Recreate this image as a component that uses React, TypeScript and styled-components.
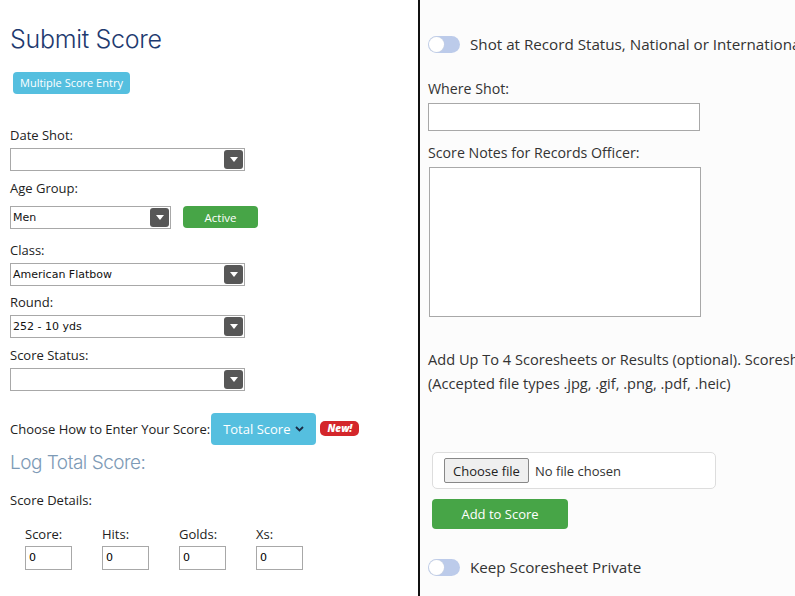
import { createGlobalStyle } from "styled-components";
import styled from "styled-components";

const GlobalStyle = createGlobalStyle`
 html, body {
  margin: 0;
  padding: 0;
  overflow: hidden;
 }
 body {
  font-family: "Open Sans", "Liberation Sans", sans-serif;
  color: #222;
  background: #fff;
 }
 * {
  box-sizing: border-box;
 }
`;

const Page = styled.div`
 display: grid;
 grid-template-columns: 418px 1fr;
 width: 795px;
 height: 596px;
 overflow: hidden;
`;

const LeftPane = styled.div`
 background: #fff;
 padding: 24px 0 0 10px;
 display: flex;
 flex-direction: column;
`;

const RightPane = styled.div`
 background: #fcfcfc;
 border-left: 2px solid #111;
 padding: 34px 0 0 8px;
 display: flex;
 flex-direction: column;
 overflow: hidden;
`;

const Title = styled.h1`
 margin: 0;
 font-family: "Inter", "Open Sans", sans-serif;
 font-weight: 300;
 font-size: 25px;
 color: #1e3a6f;
 letter-spacing: -0.3px;
`;

const ButtonSlot = styled.div`
 margin: 16px 0 0 3px;
`;

const SmallButton = styled.button<{ $tone: "info" | "success"; $width?: number }>`
 border: none;
 border-radius: 4px;
 background: ${(p) => (p.$tone === "info" ? "#55bfdf" : "#47a547")};
 color: #fff;
 font-family: "Open Sans", sans-serif;
 font-size: ${(p) => (p.$tone === "info" ? 11 : 11.5)}px;
 font-weight: 500;
 height: 22px;
 width: ${(p) => (p.$width ? `${p.$width}px` : "auto")};
 padding: 0 7px;
 cursor: pointer;
`;

const Field = styled.div<{ $top?: number }>`
 display: flex;
 flex-direction: column;
 gap: 5px;
 margin-top: ${(p) => p.$top ?? 8}px;
`;

const Label = styled.label`
 font-size: 13px;
 color: #222;
 line-height: 16px;
`;

const Row = styled.div`
 display: flex;
 align-items: center;
 gap: 12px;
 margin: 5px 0 5px;
`;

const SelectBox = styled.div<{ $width: number }>`
 width: ${(p) => p.$width}px;
 height: 23px;
 border: 1px solid #a8a8a8;
 background: #fff;
 display: flex;
 align-items: center;
 justify-content: space-between;
 padding: 0 1px 0 2px;
 font-family: "DejaVu Sans", Verdana, sans-serif;
 font-size: 11px;
 color: #111;
`;

const Arrow = styled.span`
 width: 19px;
 height: 19px;
 border-radius: 3px;
 background: #575757;
 display: flex;
 align-items: center;
 justify-content: center;
 &::after {
  content: "";
  border-left: 4px solid transparent;
  border-right: 4px solid transparent;
  border-top: 5px solid #fff;
 }
`;

const ChooseRow = styled.div`
 display: flex;
 align-items: center;
 gap: 1px;
 margin-top: 22px;
 font-size: 13px;
`;

const DropButton = styled.button`
 border: none;
 border-radius: 4px;
 background: #55bfdf;
 color: #fff;
 font-family: "Open Sans", sans-serif;
 font-size: 13px;
 height: 32px;
 padding: 0 12px;
 display: flex;
 align-items: center;
 gap: 5px;
`;

const NewBadge = styled.span`
 background: #d4262b;
 color: #fff;
 font-size: 10px;
 font-weight: 800;
 font-style: italic;
 border-radius: 5px;
 padding: 1px 7px;
 line-height: 13px;
 margin-left: 3px;
`;

const SubTitle = styled.h2`
 margin: 6px 0 0;
 font-family: "Inter", "Open Sans", sans-serif;
 font-weight: 300;
 font-size: 19px;
 color: #7d9ab6;
 letter-spacing: -0.5px;
`;

const Details = styled.div`
 margin-top: 17px;
 font-size: 13px;
`;

const NumberGrid = styled.div`
 display: grid;
 grid-template-columns: repeat(4, 77px);
 margin: 16px 0 0 15px;
`;

const NumberField = styled.div`
 display: flex;
 flex-direction: column;
 gap: 3px;
 font-size: 13px;
`;

const NumberInput = styled.input`
 width: 47px;
 height: 24px;
 border: 1px solid #a8a8a8;
 font-family: "DejaVu Sans", sans-serif;
 font-size: 11px;
 padding: 0 3px;
`;

const ToggleRow = styled.div<{ $top?: number }>`
 display: flex;
 align-items: center;
 gap: 10px;
 white-space: nowrap;
 font-size: 15.2px;
 color: #333;
 margin-top: ${(p) => p.$top ?? 0}px;
`;

const Toggle = styled.span`
 position: relative;
 width: 32px;
 height: 17px;
 border-radius: 9px;
 background: #bccbea;
 flex-shrink: 0;
 &::before {
  content: "";
  position: absolute;
  left: 1px;
  top: 1px;
  width: 15px;
  height: 15px;
  border-radius: 50%;
  background: #fff;
  box-shadow: 0 0 0 0.5px #c9d2e2;
 }
`;

const RLabel = styled.label`
 font-size: 14.2px;
 color: #333;
 line-height: 18px;
 white-space: nowrap;
`;

const TextInput = styled.input`
 width: 272px;
 height: 28px;
 border: 1px solid #a8a8a8;
 background: #fff;
`;

const NotesArea = styled.textarea`
 width: 272px;
 height: 150px;
 border: 1px solid #a8a8a8;
 background: #fff;
 resize: none;
 margin-left: 1px;
`;

const UploadText = styled.p`
 margin: 30px 0 0;
 font-size: 14.6px;
 line-height: 24px;
 color: #333;
 white-space: nowrap;
`;

const FileBox = styled.div`
 width: 284px;
 height: 37px;
 margin: 57px 0 0 4px;
 border: 1px solid #ddd;
 border-radius: 5px;
 background: #fff;
 display: flex;
 align-items: center;
 padding-left: 11px;
 gap: 6px;
 font-size: 13px;
 color: #333;
`;

const FileButton = styled.span`
 height: 25px;
 padding: 0 8px;
 border: 1px solid #888;
 border-radius: 2px;
 background: #efefef;
 display: flex;
 align-items: center;
 font-size: 13px;
 color: #222;
`;

const AddButton = styled.button`
 width: 136px;
 height: 30px;
 margin: 10px 0 0 4px;
 border: none;
 border-radius: 4px;
 background: #47a547;
 color: #fff;
 font-family: "Open Sans", sans-serif;
 font-size: 13px;
`;

const selects = [
 { label: "Class:", value: "American Flatbow", top: 8 },
 { label: "Round:", value: "252 - 10 yds", top: 8 },
 { label: "Score Status:", value: "", top: 9 },
];

const Chevron = () => (
 <svg width="9" height="6" viewBox="0 0 9 6">
  <path d="M1 1l3.5 3.5L8 1" stroke="#1b2b44" strokeWidth="1.8" fill="none" />
 </svg>
);

export default function App() {
 return (
  <Page>
   <GlobalStyle />
   <LeftPane>
    <Title>Submit Score</Title>
    <ButtonSlot>
     <SmallButton $tone="info">Multiple Score Entry</SmallButton>
    </ButtonSlot>
    <Field $top={33}>
     <Label>Date Shot:</Label>
     <SelectBox $width={235}>
      <span></span>
      <Arrow />
     </SelectBox>
    </Field>
    <Field $top={9}>
     <Label>Age Group:</Label>
     <Row>
      <SelectBox $width={161}>
       <span>Men</span>
       <Arrow />
      </SelectBox>
      <SmallButton $tone="success" $width={75}>
       Active
      </SmallButton>
     </Row>
    </Field>
    {selects.map((s) => (
     <Field key={s.label} $top={s.top}>
      <Label>{s.label}</Label>
      <SelectBox $width={235}>
       <span>{s.value}</span>
       <Arrow />
      </SelectBox>
     </Field>
    ))}
    <ChooseRow>
     <span>Choose How to Enter Your Score:</span>
     <DropButton>
      Total Score <Chevron />
     </DropButton>
     <NewBadge>New!</NewBadge>
    </ChooseRow>
    <SubTitle>Log Total Score:</SubTitle>
    <Details>Score Details:</Details>
    <NumberGrid>
     {["Score:", "Hits:", "Golds:", "Xs:"].map((l) => (
      <NumberField key={l}>
       <span>{l}</span>
       <NumberInput defaultValue="0" />
      </NumberField>
     ))}
    </NumberGrid>
   </LeftPane>
   <RightPane>
    <ToggleRow>
     <Toggle />
     Shot at Record Status, National or International
    </ToggleRow>
    <Field $top={26}>
     <RLabel>Where Shot:</RLabel>
     <TextInput />
    </Field>
    <Field $top={13}>
     <RLabel>Score Notes for Records Officer:</RLabel>
     <NotesArea />
    </Field>
    <UploadText>
     Add Up To 4 Scoresheets or Results (optional). Scoresheets will be
     <br />
     (Accepted file types .jpg, .gif, .png, .pdf, .heic)
    </UploadText>
    <FileBox>
     <FileButton>Choose file</FileButton>
     No file chosen
    </FileBox>
    <AddButton>Add to Score</AddButton>
    <ToggleRow $top={28}>
     <Toggle />
     Keep Scoresheet Private
    </ToggleRow>
   </RightPane>
  </Page>
 );
}
